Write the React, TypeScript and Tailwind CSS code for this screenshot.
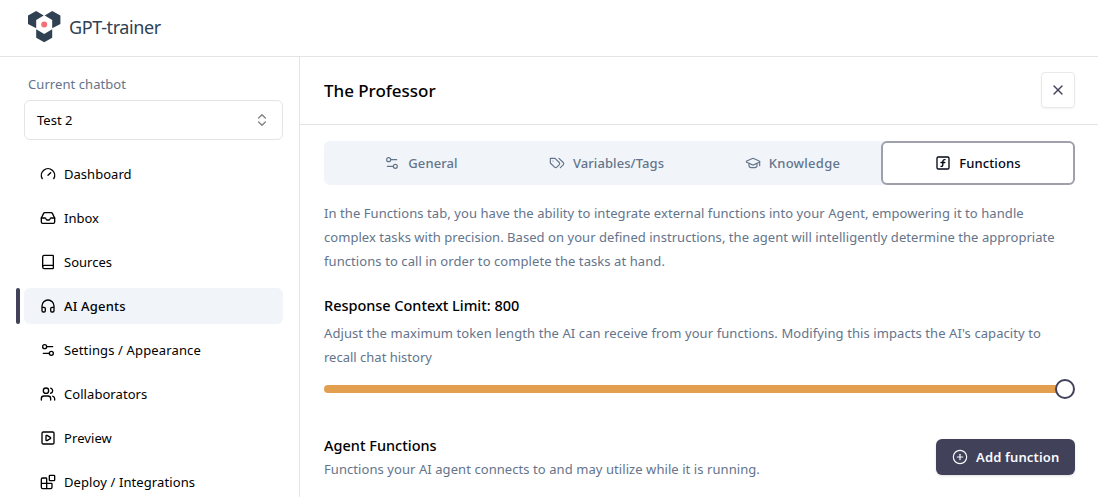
import {
  Gauge, Inbox, Book, Headphones, Settings2, Users, SquarePlay, Blocks,
  GraduationCap, SquareFunction, CirclePlus, ChevronsUpDown, X,
} from "lucide-react";

function Tags({ size = 16, strokeWidth = 2 }: { size?: number; strokeWidth?: number }) {
  return (
    <svg width={size} height={size} viewBox="0 0 24 24" fill="none" stroke="currentColor" strokeWidth={strokeWidth} strokeLinecap="round" strokeLinejoin="round">
      <path d="M9 5H2v7l6.29 6.29c.94.94 2.48.94 3.42 0l3.58-3.58c.94-.94.94-2.48 0-3.42L9 5Z" />
      <path d="M6 9.010V9" />
      <path d="m15 5 6.300 6.300a2.400 2.400 0 0 1 0 3.400L17 19" />
    </svg>
  );
}

const nav = [
  { label: "Dashboard", icon: Gauge, tracking: "tracking-[0.03px]" },
  { label: "Inbox", icon: Inbox, tracking: "" },
  { label: "Sources", icon: Book, tracking: "" },
  { label: "AI Agents", icon: Headphones, tracking: "tracking-[0.2px]", active: true },
  { label: "Settings / Appearance", icon: Settings2, tracking: "tracking-[0.14px]" },
  { label: "Collaborators", icon: Users, tracking: "tracking-[0.06px]" },
  { label: "Preview", icon: SquarePlay, tracking: "tracking-[0.08px]" },
  { label: "Deploy / Integrations", icon: Blocks, tracking: "tracking-[0.1px]" },
];

const tabs = [
  { label: "General", icon: Settings2, tracking: "tracking-[0.1px]" },
  { label: "Variables/Tags", icon: Tags, tracking: "tracking-[0.08px]" },
  { label: "Knowledge", icon: GraduationCap, tracking: "tracking-[0.25px]", shift: "pl-2" },
  { label: "Functions", icon: SquareFunction, tracking: "tracking-[0.1px]", active: true },
];

function Logo() {
  return (
    <svg width="33" height="32" viewBox="0 0 33 32" fill="none">
      <path fill="#2f4153" d="M8.200 0L15.700 4.400 8.200 8.900V17.300L0 13V4.600zM24.200 0L16.700 4.400 24.200 8.900V17.300L32.400 13V4.600zM8.200 18.300L16.200 22.900 24.200 18.300V26.800L16.200 31.300 8.200 26.800z" />
      <circle cx="16.200" cy="13.600" r="3" fill="#f2707a" />
    </svg>
  );
}

export default function App() {
  return (
    <div className="flex h-[497px] w-full flex-col overflow-hidden bg-white font-['Noto_Sans',sans-serif] text-[13px] text-black">
      <header className="flex h-[57px] shrink-0 items-center border-b border-[#e2e4e8] pl-7 pb-0.5">
        <Logo />
        <span className="ml-2 text-[18px] tracking-[-0.38px] text-[#2f4153]">GPT-trainer</span>
      </header>
      <div className="flex min-h-0 flex-1">
        <aside className="w-[300px] shrink-0 border-r border-[#e2e4e8] pl-4 pr-4 pt-[17px]">
          <div className="pl-3 leading-5 tracking-[0.07px] text-[#64748b]">Current chatbot</div>
          <button className="ml-2 mt-1.5 flex h-10 w-[259px] items-center justify-between rounded-md border border-[#e2e4e8] px-3">
            <span className="pt-0.5">Test 2</span>
            <ChevronsUpDown size={16} className="text-[#808080]" />
          </button>
          <nav className="mt-4 flex flex-col gap-2">
            {nav.map(({ label, icon: Icon, tracking, active }) => (
              <div key={label} className="flex h-9 gap-1">
                <div className={active ? "w-1 rounded-xs bg-[#41415a]" : "w-1"} />
                <div className={active ? "flex w-[259px] items-center gap-2 rounded-md bg-[#f1f5f9] pl-4 font-medium" : "flex w-[259px] items-center gap-2 pl-4"}>
                  <Icon size={16} />
                  <span className={`pt-0.5 ${tracking}`}>{label}</span>
                </div>
              </div>
            ))}
          </nav>
        </aside>
        <main className="min-w-0 flex-1">
          <div className="flex h-[68px] items-center justify-between border-b border-[#e2e4e8] pl-6 pr-[23px]">
            <h1 className="text-[17px] font-medium tracking-[-0.03px]">The Professor</h1>
            <button className="mb-0.5 flex h-9 w-[34px] items-center justify-center rounded-[4px] border border-[#e8e9ed] text-[#41415a] shadow-xs">
              <X size={16} />
            </button>
          </div>
          <div className="pl-6 pr-[23px] pt-4">
            <div className="grid h-11 grid-cols-[194px_177px_187px_193px] rounded-md bg-[#f1f5f9] font-medium text-[#64748b]">
              {tabs.map(({ label, icon: Icon, tracking, shift, active }) => (
                <div key={label} className={`flex items-center justify-center gap-2 ${shift ?? ""} ${active ? "-ml-px rounded-md border-2 border-[#a0a0ac] bg-white text-[#020817]" : ""}`}>
                  <Icon size={16} strokeWidth={active ? 2 : 1.75} />
                  <span className={`pt-0.5 ${tracking}`}>{label}</span>
                </div>
              ))}
            </div>
            <p className="mt-4 whitespace-nowrap leading-6 text-[#64748b]">
              <span className="tracking-[0.07px]">In the Functions tab, you have the ability to integrate external functions into your Agent, empowering it to handle</span><br />
              <span className="tracking-[0.045px]">complex tasks with precision. Based on your defined instructions, the agent will intelligently determine the appropriate</span><br />
              <span className="tracking-[0.08px]">functions to call in order to complete the tasks at hand.</span>
            </p>
            <h2 className="mt-5 text-[14.500px] font-medium leading-6 tracking-[-0.03px]">Response Context Limit: 800</h2>
            <p className="mt-1 whitespace-nowrap leading-6 text-[#64748b]">
              <span className="tracking-[0.087px]">Adjust the maximum token length the AI can receive from your functions. Modifying this impacts the AI's capacity to</span><br />
              <span>recall chat history</span>
            </p>
            <div className="mt-2.5 flex h-5 items-center">
              <div className="h-2 flex-1 rounded-l-full bg-[#e29f4f]" />
              <div className="-ml-px size-5 rounded-full border-2 border-[#41415a] bg-white" />
            </div>
            <div className="mt-[34px] flex justify-between">
              <div>
                <h2 className="text-[14.500px] font-medium leading-6">Agent Functions</h2>
                <p className="leading-6 tracking-[0.07px] text-[#64748b]">Functions your AI agent connects to and may utilize while it is running.</p>
              </div>
              <button className="mt-1.5 flex h-9 w-[139px] items-center gap-2 rounded-md bg-[#41415a] pl-4 font-semibold text-[#f8fafc] shadow-sm">
                <CirclePlus size={16} strokeWidth={1.75} />
                <span className="pt-0.5 tracking-[0.15px]">Add function</span>
              </button>
            </div>
          </div>
        </main>
      </div>
    </div>
  );
}
